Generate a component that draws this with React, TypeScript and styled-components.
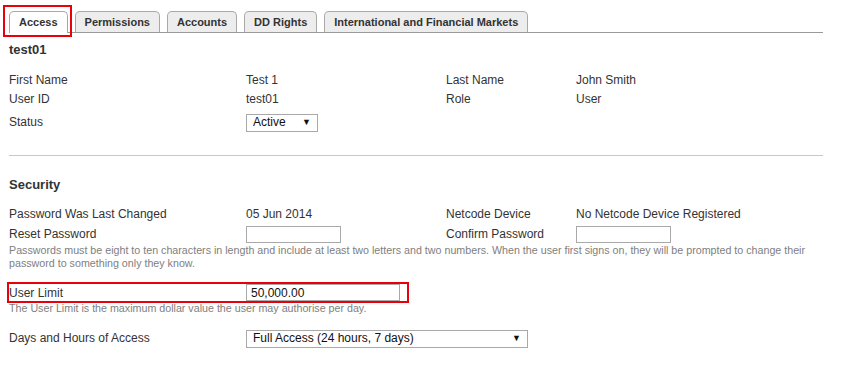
import React from "react";
import styled, { createGlobalStyle } from "styled-components";

const GlobalStyle = createGlobalStyle`
  html, body {
    margin: 0;
    padding: 0;
    background: #ffffff;
  }
  body {
    font-family: "Liberation Sans", Arial, sans-serif;
    color: #333333;
  }
`;

const Page = styled.div`
  width: 814px;
  padding: 11px 29px 20px 9px;
`;

const TabBar = styled.div`
  position: relative;
  display: flex;
  gap: 7px;
  border-bottom: 1px solid #999999;
  height: 21px;
`;

const Tab = styled.div<{ $active?: boolean }>`
  height: 20px;
  padding: 0 9px;
  border: 1px solid #a8a8a8;
  border-bottom: none;
  border-radius: 5px 5px 0 0;
  background: ${({ $active }) => ($active ? "#ffffff" : "#ededed")};
  font-size: 11px;
  font-weight: bold;
  line-height: 20px;
  color: #333333;
  white-space: nowrap;
  ${({ $active }) => ($active ? "height: 21px; margin-bottom: -1px;" : "")}
`;

const Marker = styled.div`
  position: absolute;
  left: -6px;
  top: -6px;
  width: 65px;
  height: 28px;
  border: 2px solid #e8000b;
  pointer-events: none;
`;

const Heading = styled.h2`
  margin: 0;
  font-size: 13px;
  font-weight: bold;
  line-height: 16px;
  color: #333333;
`;

const UserHeading = styled(Heading)`
  margin-top: 9px;
`;

const SectionHeading = styled(Heading)`
  margin-top: 21px;
`;

const Grid = styled.div<{ $top: number }>`
  display: grid;
  grid-template-columns: 237px 200px 130px 1fr;
  align-items: center;
  margin-top: ${({ $top }) => $top}px;
  font-size: 12px;
  line-height: 19px;
`;

const Label = styled.div`
  color: #333333;
  white-space: nowrap;
`;

const Value = styled.div`
  color: #333333;
  white-space: nowrap;
`;

const FieldCell = styled.div<{ $h: number }>`
  display: flex;
  align-items: center;
  height: ${({ $h }) => $h}px;
`;

const TextInput = styled.input<{ $w: number }>`
  box-sizing: border-box;
  width: ${({ $w }) => $w}px;
  height: 17px;
  margin: 0;
  padding: 0 4px;
  border: 1px solid #a9a9a9;
  font-family: "Liberation Sans", Arial, sans-serif;
  font-size: 12px;
  color: #111111;
  outline: none;
`;

const Select = styled.div<{ $w: number }>`
  box-sizing: border-box;
  display: flex;
  align-items: center;
  justify-content: space-between;
  width: ${({ $w }) => $w}px;
  height: 18px;
  padding: 0 6px 0 6px;
  border: 1px solid #a9a9a9;
  background: #ffffff;
  font-size: 12px;
  color: #111111;
`;

const Caret = styled.span`
  font-size: 9px;
  color: #111111;
`;

const Divider = styled.hr`
  margin: 19px 0 0 0;
  border: none;
  border-top: 1px solid #c8c8c8;
  height: 0;
`;

const Help = styled.p<{ $top?: number }>`
  margin: ${({ $top }) => $top ?? 0}px 0 0 0;
  font-size: 10.7px;
  line-height: 13px;
  color: #808080;
`;

const LimitRow = styled.div`
  display: grid;
  grid-template-columns: 237px 154px;
  align-items: center;
  width: 398px;
  height: 17px;
  margin-top: 14px;
  font-size: 12px;
  outline: 2px solid #e8000b;
`;

const AccessRow = styled.div`
  display: grid;
  grid-template-columns: 237px 282px;
  align-items: center;
  height: 19px;
  margin-top: 14px;
  font-size: 12px;
  line-height: 19px;
`;

const tabs = ["Access", "Permissions", "Accounts", "DD Rights", "International and Financial Markets"];

const App = () => {
  return (
    <Page>
      <GlobalStyle />
      <TabBar>
        {tabs.map((t, i) => (
          <Tab key={t} $active={i === 0}>
            {t}
          </Tab>
        ))}
        <Marker />
      </TabBar>

      <UserHeading>test01</UserHeading>

      <Grid $top={13}>
        <Label>First Name</Label>
        <Value>Test 1</Value>
        <Label>Last Name</Label>
        <Value>John Smith</Value>
        <Label>User ID</Label>
        <Value>test01</Value>
        <Label>Role</Label>
        <Value>User</Value>
        <Label>Status</Label>
        <FieldCell $h={27}>
          <Select $w={72}>
            <span>Active</span>
            <Caret>▼</Caret>
          </Select>
        </FieldCell>
      </Grid>

      <Divider />

      <SectionHeading>Security</SectionHeading>

      <Grid $top={12}>
        <Label>Password Was Last Changed</Label>
        <Value>05 Jun 2014</Value>
        <Label>Netcode Device</Label>
        <Value>No Netcode Device Registered</Value>
        <Label>Reset Password</Label>
        <FieldCell $h={21}>
          <TextInput $w={95} type="password" />
        </FieldCell>
        <Label>Confirm Password</Label>
        <FieldCell $h={21}>
          <TextInput $w={95} type="password" />
        </FieldCell>
      </Grid>
      <Help $top={-1}>
        Passwords must be eight to ten characters in length and include at least two letters and two numbers. When the
        user first signs on, they will be prompted to change their password to something only they know.
      </Help>

      <LimitRow>
        <Label>User Limit</Label>
        <TextInput $w={154} defaultValue="50,000.00" />
      </LimitRow>
      <Help $top={1}>The User Limit is the maximum dollar value the user may authorise per day.</Help>

      <AccessRow>
        <Label>Days and Hours of Access</Label>
        <Select $w={282}>
          <span>Full Access (24 hours, 7 days)</span>
          <Caret>▼</Caret>
        </Select>
      </AccessRow>
    </Page>
  );
};

export default App;
